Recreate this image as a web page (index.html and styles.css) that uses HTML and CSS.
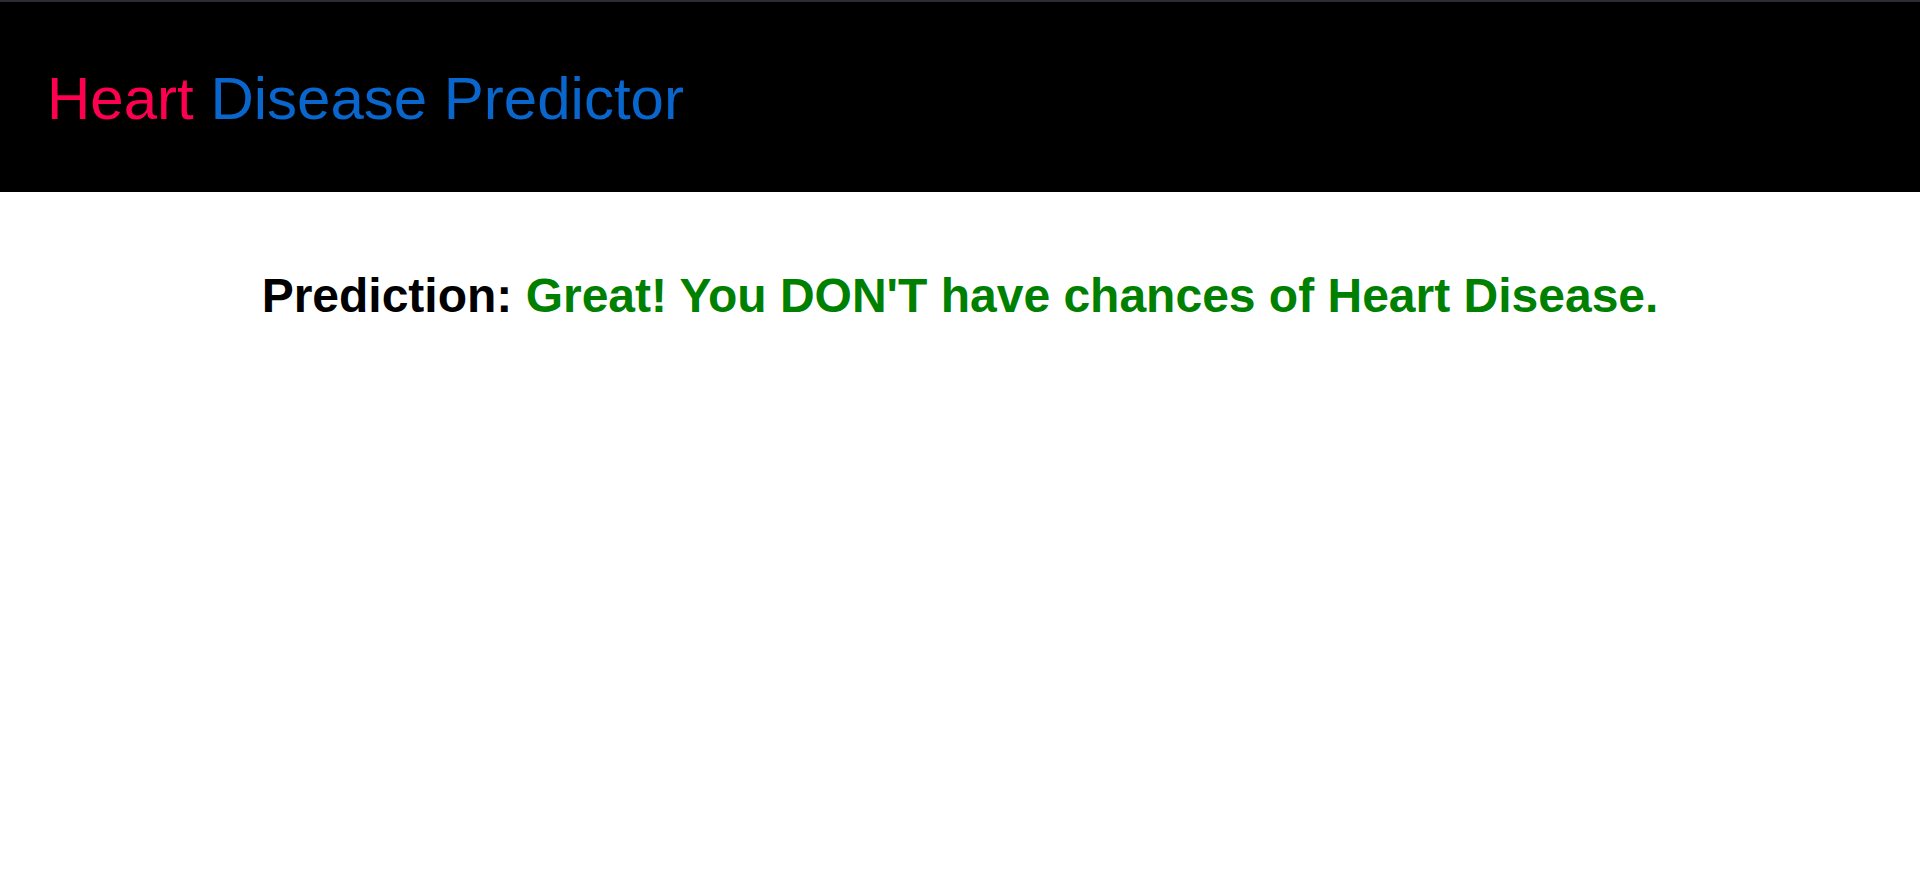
FILE: index.html
```html
<!DOCTYPE html>
<html lang="en">
<head>
<meta charset="utf-8">
<title>Heart Disease Predictor</title>
<link rel="stylesheet" href="styles.css">
</head>
<body>
<header class="topbar">
  <h1 class="brand"><span class="brand-heart">Heart</span> <span class="brand-rest">Disease Predictor</span></h1>
</header>
<main class="result">
  <h2 class="prediction"><span class="label">Prediction:</span> <span class="outcome-good">Great! You DON'T have chances of Heart Disease.</span></h2>
</main>
</body>
</html>
```
FILE: styles.css
```css
html, body {
  margin: 0;
  padding: 0;
  background: #ffffff;
  font-family: "Liberation Sans", Arial, sans-serif;
}

.topbar {
  box-sizing: border-box;
  height: 192px;
  background: #000000;
  border-top: 2px solid #2c2c34;
  display: flex;
  align-items: center;
  padding: 2px 47px 0;
}

.brand {
  margin: 0;
  font-size: 60px;
  font-weight: normal;
  line-height: normal;
}

.brand-heart {
  color: #ff0050;
}

.brand-rest {
  color: #0866cc;
}

.result {
  padding-top: 76px;
  text-align: center;
}

.prediction {
  margin: 0;
  font-size: 48px;
  font-weight: bold;
  line-height: normal;
}

.label {
  color: #000000;
}

.outcome-good {
  color: #008000;
}
```
